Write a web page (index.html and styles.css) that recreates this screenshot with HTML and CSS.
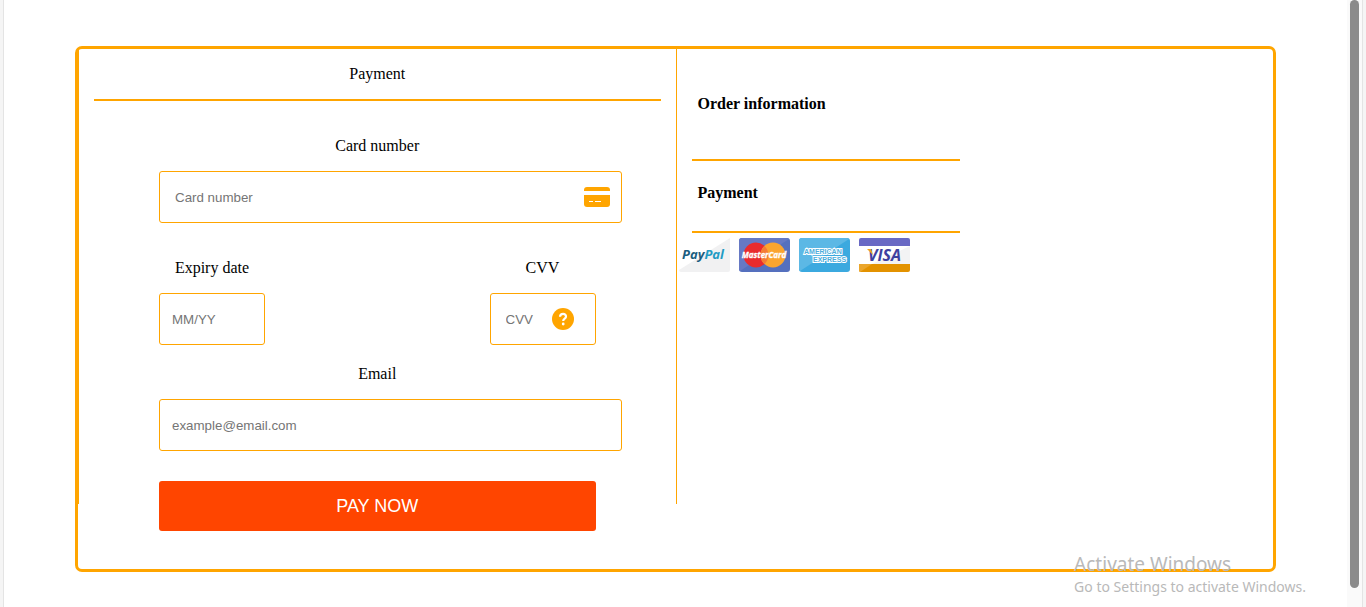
FILE: index.html
```html
<!DOCTYPE html>
<html lang="en">
<head>
<meta charset="utf-8">
<meta name="viewport" content="width=device-width, initial-scale=1">
<title>Payment</title>
<link rel="stylesheet" href="styles.css">
</head>
<body>
<div class="window">
  <main class="page">
    <div class="checkout">
      <section class="payment">
        <header class="payment-title">Payment</header>
        <form class="form">
          <div class="field">
            <label for="card">Card number</label>
            <div class="control wide">
              <input id="card" class="with-icon" type="text" placeholder="Card number">
              <svg class="card-icon" viewBox="0 0 26 20" aria-hidden="true">
                <path d="M0 4V3a3 3 0 0 1 3-3h20a3 3 0 0 1 3 3v1z" fill="#ffa500"/>
                <path d="M0 8h26v9a3 3 0 0 1-3 3H3a3 3 0 0 1-3-3z" fill="#ffa500"/>
                <path d="M5 14.500h4M11 14.500h6" stroke="#fff" stroke-width="1.200"/>
              </svg>
            </div>
          </div>
          <div class="pair">
            <div class="field small">
              <label for="expiry">Expiry date</label>
              <div class="control"><input id="expiry" type="text" placeholder="MM/YY"></div>
            </div>
            <div class="field small">
              <label for="cvv">CVV</label>
              <div class="control">
                <input id="cvv" class="with-icon" type="text" placeholder="CVV">
                <svg class="help-icon" viewBox="0 0 22 22" aria-hidden="true">
                  <circle cx="11" cy="11" r="11" fill="#ffa500"/>
                  <path d="M8 8.800C8.200 4.800 14.200 5 14 8.600C13.900 10.600 11.200 10.500 11.200 12.900" fill="none" stroke="#fff" stroke-width="2.200"/>
                  <circle cx="11.200" cy="16" r="1.400" fill="#fff"/>
                </svg>
              </div>
            </div>
          </div>
          <div class="field">
            <label for="email">Email</label>
            <div class="control wide"><input id="email" type="email" placeholder="example@email.com"></div>
          </div>
          <button class="pay" type="button">PAY NOW</button>
        </form>
      </section>
      <section class="order">
        <h2 class="order-title">Order information</h2>
        <h2 class="methods-title">Payment</h2>
        <div class="cards">
          <svg class="brand" viewBox="0 0 51 34" role="img" aria-label="PayPal">
            <path d="M51 0v32a2 2 0 0 1-2 2H2a2 2 0 0 1-2-2z" fill="#f1f1f2"/>
            <text x="3" y="21" class="brand-text" font-size="13" fill="#1b5e80">Pay<tspan fill="#1f9bc4">Pal</tspan></text>
          </svg>
          <svg class="brand" viewBox="0 0 51 34" role="img" aria-label="MasterCard">
            <rect width="51" height="34" rx="3" fill="#5570be"/>
            <path d="M48 0H3a3 3 0 0 0-3 3v28a3 3 0 0 0 1 2L50 1z" fill="#6679c4"/>
            <circle cx="17" cy="17" r="12.500" fill="#e92b2d"/>
            <circle cx="34" cy="17" r="12.500" fill="#fba52f"/>
            <path d="M25.500 8a12.500 12.500 0 0 0 0 18a12.500 12.500 0 0 0 0-18z" fill="#f47b35"/>
            <text x="25" y="20" text-anchor="middle" class="brand-text" font-size="8" fill="#fff" stroke="#fff" stroke-width="0.300">MasterCard</text>
          </svg>
          <svg class="brand" viewBox="0 0 51 34" role="img" aria-label="American Express">
            <rect width="51" height="34" rx="3" fill="#3ba9df"/>
            <path d="M48 0H3a3 3 0 0 0-3 3v28a3 3 0 0 0 1 2L50 1z" fill="#5cb8e5"/>
            <g class="amex" font-size="7" fill="#4eaedc" stroke="#fff" stroke-width="2" paint-order="stroke">
              <text x="5" y="16">AMERICAN</text>
              <text x="14" y="24">EXPRESS</text>
            </g>
          </svg>
          <svg class="brand" viewBox="0 0 51 34" role="img" aria-label="Visa">
            <path d="M0 8V2a2 2 0 0 1 2-2h47a2 2 0 0 1 2 2v6z" fill="#6969c4"/>
            <path d="M0 8h51v18H0z" fill="#fff"/>
            <path d="M51 8v18H13z" fill="#f3f3f4"/>
            <path d="M0 26h51v6a2 2 0 0 1-2 2H2a2 2 0 0 1-2-2z" fill="#e39200"/>
            <path d="M0 26h13L1 34a2 2 0 0 1-1-2z" fill="#eba62c"/>
            <text x="9" y="23" class="brand-text" font-size="16" fill="#3e419f">VISA</text>
            <path d="M8 11h4l2 6z" fill="#efa51e"/>
          </svg>
        </div>
      </section>
    </div>
  </main>
  <div class="scroll-track"><div class="scroll-thumb"></div></div>
  <aside class="activation">
    <p class="activation-title">Activate Windows</p>
    <p class="activation-note">Go to Settings to activate Windows.</p>
  </aside>
</div>
</body>
</html>
```
FILE: styles.css
```css
* { box-sizing: border-box; }

body {
  margin: 0;
  background: #f5f5f5;
  color: #000;
  font: 16px/18px "Liberation Serif", "Times New Roman", serif;
}

.window {
  position: relative;
  display: flex;
  min-height: 100vh;
  margin: 0 3px;
  border-left: 1px solid #e4e4e4;
  border-right: 1px solid #e4e4e4;
  background: #fff;
}

.page { flex: 1; padding: 46px 71px 35px; }

.checkout {
  display: flex;
  align-items: flex-start;
  border: 3px solid orange;
  border-radius: 7px;
  padding-bottom: 38px;
}

.payment {
  box-sizing: content-box;
  flex: 0 0 calc(50% - 1px);
  height: 455px;
  margin-bottom: 27px;
  border: solid orange;
  border-width: 0 1px;
}

.payment-title {
  margin: 0 15px;
  padding: 16px 0;
  border-bottom: 2px solid orange;
  text-align: center;
}

.form {
  display: flex;
  flex-direction: column;
  gap: 20px;
  padding: 36px 80px 0;
}

.field { display: flex; flex-direction: column; }
.field label { margin-bottom: 16px; text-align: center; }
.small { width: 106px; }

.pair {
  display: flex;
  justify-content: space-between;
  margin-top: 16px;
}

.control { position: relative; }
.wide { margin-right: -26px; }

input {
  display: block;
  width: 100%;
  height: 52px;
  padding: 12px;
  border: 1px solid orange;
  border-radius: 3px;
  background: #fff;
  font-family: "Liberation Sans", Arial, sans-serif;
}

.with-icon { padding-left: 15px; }
input::placeholder { color: #757575; }

.card-icon {
  position: absolute;
  top: 16px;
  right: 12px;
  width: 26px;
  height: 20px;
}

.help-icon {
  position: absolute;
  top: 15px;
  right: 22px;
  width: 22px;
  height: 22px;
}

.pay {
  height: 50px;
  margin-top: 10px;
  border: 0;
  border-radius: 3px;
  background: orangered;
  color: #fff;
  font: 18px "Liberation Sans", Arial, sans-serif;
}

.order { flex: 1; min-width: 0; }

.order h2 {
  width: 45%;
  margin: 0 0 0 15px;
  padding-left: 6px;
  border-bottom: 2px solid orange;
  font-size: 16px;
}

.order .order-title { padding-top: 46px; padding-bottom: 46px; }
.order .methods-title { padding-top: 23px; padding-bottom: 29px; }

.cards { display: flex; gap: 9px; padding: 5px 0 0 2px; }
.brand { width: 51px; height: 34px; }
.brand-text { font-family: "Open Sans", sans-serif; font-weight: 700; font-style: italic; }
.amex { font-family: "Liberation Sans", sans-serif; font-weight: 700; }

.scroll-track { width: 15px; padding: 0 3px 19px; background: #fafafa; }
.scroll-thumb { height: 100%; border-radius: 5px; background: #8b8b8b; }

.activation {
  position: absolute;
  right: 56px;
  bottom: 10px;
  color: #b9b9b9;
  font-family: "Noto Sans", "Open Sans", sans-serif;
}

.activation p { margin: 0; }
.activation-title { font-size: 19px; line-height: 26px; }
.activation-note { font-size: 14px; line-height: 20px; }
```
